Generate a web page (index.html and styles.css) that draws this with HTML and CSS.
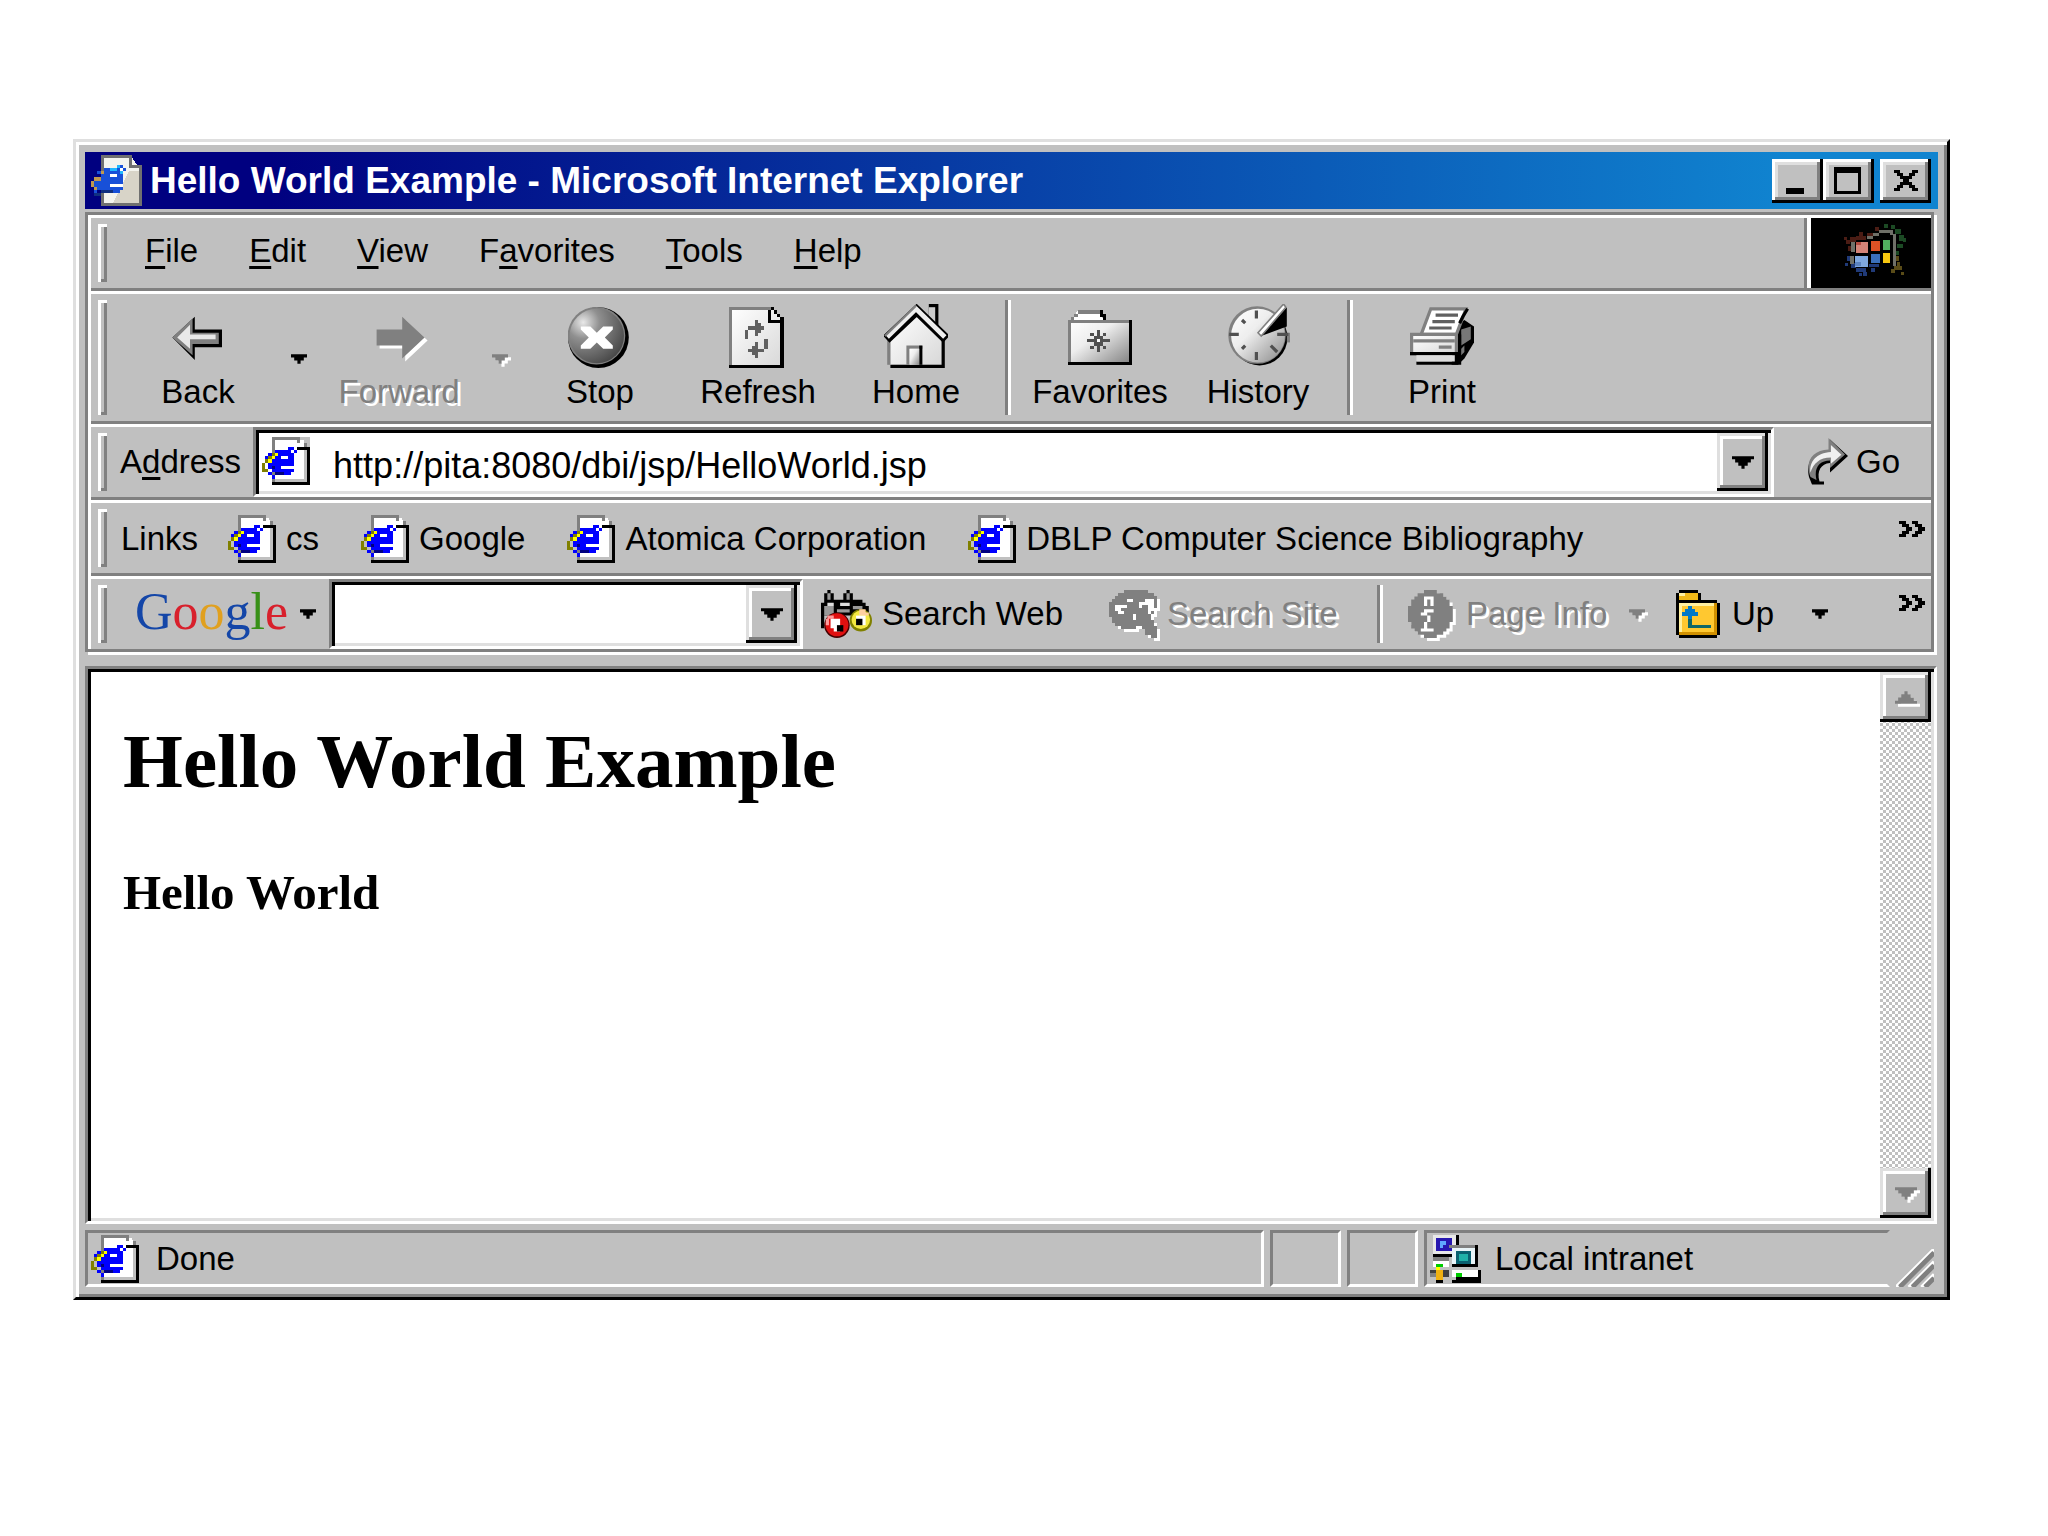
FILE: index.html
```html
<!DOCTYPE html>
<html lang="en">
<head>
<meta charset="utf-8">
<title>Hello World Example - Microsoft Internet Explorer</title>
<link rel="stylesheet" href="styles.css">
</head>
<body>
<svg class="defs" aria-hidden="true">
  <symbol id="page-e" viewBox="0 0 15 15">
    <path fill="#fff" d="M3 0h9l2 3v11H3z"/>
    <path fill="#808080" d="M3 0h9v1H4v13H3zM11 1h1v1h-1zM13 2h1v1h-1z"/>
    <path fill="#c0c0c0" d="M12 0h3v3h-1V2h-1V1h-1zM4 13h9V4h1v10H4z"/>
    <path fill="#000" d="M11 3h4v12H3v-1h11V4h-3z"/>
    <path fill="#00f" d="M8 3h2v1H8zM4 4h5v1H4zM10 4h1v1h-1zM2 5h1v1H2zM5 5h5v1H5zM4 6h2v1H4zM8 6h2v1H8zM3 7h7v1H3zM2 8h8v1H2zM2 9h4v1H2zM3 10h7v1H3zM4 11h5v1H4zM2 11h1v1H2zM3 12h1v1H3zM1 6h1v1H1z"/>
    <path fill="#fff" d="M9 4h1v1H9zM6 6h2v1H6zM6 9h4v1H6z"/>
    <path fill="#ff0" d="M4 5h1v1H4zM3 6h1v1H3zM2 7h1v1H2z"/>
    <path fill="#808000" d="M3 5h1v1H3zM2 6h1v1H2zM0 8h1v2h1v1H0zM1 7h1v1H1z"/>
    <path fill="#000080" d="M3 9h1v1H3zM4 11h3v1H4z"/>
  </symbol>
  <symbol id="drop" viewBox="0 0 5 3"><path d="M0 0h5v1H4v1H3v1H2V2H1V1H0z"/></symbol>
  <symbol id="drop-wide" viewBox="0 0 7 4"><path d="M0 0h7v1H6v1H5v1H4v1H3V3H2V2H1V1H0z"/></symbol>
  <symbol id="more" viewBox="0 0 8 5"><path d="M0 0h2v1h1v1h1v1H3v1H2v1H0V4h1V3h1V2H1V1H0zM4 0h2v1h1v1h1v1H7v1H6v1H4V4h1V3h1V2H5V1H4z"/></symbol>
  <linearGradient id="shine" x1="0" y1="0" x2="1" y2="1">
    <stop offset="0" stop-color="#fff"/><stop offset=".4" stop-color="#eee"/><stop offset="1" stop-color="#888"/>
  </linearGradient>
  <linearGradient id="paper" x1="0" y1="0" x2="1" y2="1">
    <stop offset="0" stop-color="#fff"/><stop offset="1" stop-color="#d8d8d8"/>
  </linearGradient>
  <radialGradient id="ball" cx=".25" cy=".25" r=".85">
    <stop offset="0" stop-color="#e8e8e8"/><stop offset=".35" stop-color="#909090"/><stop offset="1" stop-color="#484848"/>
  </radialGradient>
</svg>

<main class="window">
  <header class="titlebar">
    <svg class="title-icon" viewBox="0 0 16 16" shape-rendering="crispEdges" aria-hidden="true">
      <path fill="#f4f4ee" d="M4 1h9l2 3v11H4z"/>
      <path fill="#707070" d="M3 0h10v1H4v14h11V3h1v13H3zM12 1h1v2h3v1h-4z"/>
      <path fill="#d8d4c8" d="M12 5h3v10H7z"/>
      <path fill="#1850d8" d="M8 3h2v1H8zM4 4h5v1H4zM10 4h1v1h-1zM2 5h1v1H2zM4 5h6v1H4zM3 6h3v1H3zM8 6h2v1H8zM3 7h7v1H3zM1 8h9v1H1zM1 9h5v1H1zM2 10h8v1H2zM4 11h5v1H4zM1 11h1v1H1z"/>
      <path fill="#20b8ff" d="M6 4h2v1H6zM8 3h1v1H8zM9 5h1v1H9z"/>
      <path fill="#fff" d="M9 4h1v1H9zM6 6h2v1H6zM6 9h4v1H6z"/>
      <path fill="#c09850" d="M3 5h1v1H3zM1 7h2v1H1zM0 8h1v3h1v-1H0z"/>
      <path fill="#103080" d="M3 11h4v1H3zM1 12h2v1H1z"/>
    </svg>
    <h1 class="title-text">Hello World Example - Microsoft Internet Explorer</h1>
    <div class="title-buttons">
      <button class="title-button" aria-label="Minimize"><svg viewBox="0 0 10 10" shape-rendering="crispEdges"><path d="M1 8h6v2H1z"/></svg></button>
      <button class="title-button" aria-label="Maximize"><svg viewBox="0 0 10 10" shape-rendering="crispEdges"><path fill-rule="evenodd" d="M0 1h9v9H0zM1 3v6h7V3z"/></svg></button>
      <button class="title-button close" aria-label="Close"><svg viewBox="0 0 10 10" shape-rendering="crispEdges"><path d="M1 2h2v1h1v1h2V3h1V2h2v1H8v1H7v1H6v1h1v1h1v1h1v1H7V8H6V7H4v1H3v1H1V8h1V7h1V6h1V5H3V4H2V3H1z"/></svg></button>
    </div>
  </header>

  <section class="rebar">
    <div class="menu-row">
      <nav class="band menu">
        <span class="grip"></span>
        <button><u>F</u>ile</button>
        <button><u>E</u>dit</button>
        <button><u>V</u>iew</button>
        <button>F<u>a</u>vorites</button>
        <button><u>T</u>ools</button>
        <button><u>H</u>elp</button>
      </nav>
      <svg class="brand" viewBox="0 0 120 70" shape-rendering="crispEdges" aria-hidden="true">
        <path fill="#4b1c14" d="M35 22h4v4h-4zM39 19h6v5h-6zM48 14h4v4h-4zM56 15h6v4h-6zM64 9h4v4h-4zM37 28h5v5h-5zM33 19h3v3h-3zM45 18h10v4H45z"/>
        <path fill="#203a78" d="M36 38h5v5h-5zM40 45h5v5h-5zM45 50h10v4H45zM52 54h4v4h-4zM60 50h4v4h-4zM34 45h3v3h-3zM58 46h10v3H58zM48 55h3v3h-3z"/>
        <path fill="#1c4a24" d="M73 6h4v4h-4zM80 7h4v4h-4zM84 11h6v5h-6zM88 17h5v6h-5zM86 26h6v4h-6zM92 20h3v4h-3zM84 33h4v4h-4z"/>
        <path fill="#5a4c18" d="M84 38h4v5h-4zM83 48h8v4h-8zM86 44h3v4h-3zM80 51h4v4h-4zM90 54h3v3h-3z"/>
        <path fill="#6f7068" d="M56 18h6v-3h6v-3h14v4h3v32h-3V17h-3v-2H68v3h-6v3h-6zM40 24h4v10h-4zM39 38h4v8h-4z"/>
        <path fill="#d48478" d="M45 24h12v11H45z"/><path fill="#b44b40" d="M45 24h5v3h-5z"/>
        <path fill="#7fa8df" d="M44 38h13v11H44z"/><path fill="#5c84c0" d="M44 44h6v4h-6z"/>
        <path fill="#df5225" d="M60 23h9v10h-9z"/><path fill="#50b060" d="M72 22h7v10h-7z"/>
        <path fill="#3b70bb" d="M60 36h9v9h-9z"/><path fill="#f8c810" d="M72 35h7v10h-7z"/>
      </svg>
    </div>

    <div class="band tools">
      <span class="grip"></span>
      <button class="tool">
        <svg viewBox="0 0 20 20" aria-hidden="true"><path fill="#000" d="M2 10.500L9 4v4h8.500v5.500H9v4z"/><path fill="#808080" d="M2 10.500L8.300 4.500V9h8.200v3.500H8.300v3.500z"/><path fill="#e8e8e8" d="M3.500 10.500L7.500 6.500v3h8v1.500h-8v3z"/></svg>
        <span>Back</span>
      </button>
      <button class="tool-drop" aria-label="Back history"><svg class="drop" aria-hidden="true"><use href="#drop"/></svg></button>
      <button class="tool off" disabled>
        <svg viewBox="-1 0 20 20" aria-hidden="true"><path fill="#808080" d="M2 8h8V4l7 6.500L10 17v-4H2z"/></svg>
        <span>Forward</span>
      </button>
      <button class="tool-drop off" disabled aria-label="Forward history"><svg class="drop" aria-hidden="true"><use href="#drop"/></svg></button>
      <button class="tool">
        <svg viewBox="1 0 20 20" aria-hidden="true"><circle cx="10.500" cy="10.500" r="9.500"/><circle cx="9.900" cy="9.900" r="9" fill="#808080"/><circle cx="10" cy="10" r="8.500" fill="url(#ball)"/><path fill="#fff" d="M5 7h3l2 2 2-2h3v1l-2.500 2.500L15 13v1h-3l-2-2-2 2H5v-1l2.500-2.500L5 8z"/></svg>
        <span>Stop</span>
      </button>
      <button class="tool">
        <svg viewBox="0 0 20 20" shape-rendering="crispEdges" aria-hidden="true"><path fill="url(#paper)" d="M2 1h12l4 4v14H2z"/><path fill="#808080" d="M1 1h13v1H2v17H1z"/><path d="M14 1h1v1h1v1h1v1h1v16H1v-1h16V6h-4V2h1v3h3V4h-1V3h-1V2h-1z"/><path fill="#606060" d="M6 8h1V7h2V5h1v1h1v1h1v1h-1v1h-1v1H9V8H7v3H6zM13 11h-1v3h-2v-2H9v1H8v1H7v1h1v1h1v1h1v-2h2v-1h1z"/></svg>
        <span>Refresh</span>
      </button>
      <button class="tool">
        <svg viewBox="0 0 20 20" aria-hidden="true"><path fill="#000" d="M14 0h3v8h-3z"/><path fill="#ccc" d="M14 1h2v6h-2z"/><path fill="url(#paper)" d="M2 10L10 3l8 7v9H2z"/><path fill="none" stroke="#000" d="M2 19.500h16.500V11"/><path fill="none" stroke="#808080" d="M1.500 11v8"/><path fill="none" stroke="#000" stroke-width="3" d="M.7 11l9.500-9 9.300 9"/><path fill="none" stroke="#eee" stroke-width="1.500" d="M1 10.300l9-8.800 9 8.800"/><path fill="none" stroke="#808080" stroke-width=".7" d="M.3 10L10 .5"/><path fill="#808080" d="M7 13h5v1H8v5H7z"/><path fill="#000" d="M11 13h1v6h-1z"/><path fill="url(#shine)" d="M8 14h3v5H8z"/></svg>
        <span>Home</span>
      </button>
      <span class="divider"></span>
      <button class="tool">
        <svg viewBox="0 0 20 20" shape-rendering="crispEdges" aria-hidden="true"><path fill="#fff" d="M1 5l2-3h7l1 3z"/><path fill="url(#shine)" d="M1 5h18v13H1z"/><path fill="#808080" d="M0 5h1V4h1V3h1V2h7v1H3v1H2v1h17v1H1v12H0z"/><path d="M10 2h1v1h1v2h-1V4h-1zM19 5h1v14H0v-1h19z"/><path fill="#505050" d="M9 8h1v2h1v1h2v1h-2v1h-1v2H9v-2H8v-1H6v-1h2v-1h1zM7 9h1v1H7zM11 9h1v1h-1zM7 13h1v1H7zM11 13h1v1h-1z"/><path fill="#fff" d="M9 11h1v1H9z"/></svg>
        <span>Favorites</span>
      </button>
      <button class="tool">
        <svg viewBox="0 0 20 20" aria-hidden="true"><circle cx="10.500" cy="10.500" r="8.700"/><path fill="#808080" d="M20 9v3h-1V9z"/><circle cx="9.700" cy="9.700" r="9" fill="#808080"/><circle cx="10" cy="9.900" r="8.400" fill="url(#shine)"/><path d="M11 10l8-9v6z"/><path fill="#fff" stroke="#808080" stroke-width=".5" d="M10 9l8-9 .7 1L11 10z"/><path stroke="#505050" d="M9.500 2v2.500M1 9.500h3M9.500 15v2.500M16 9.500h3.500M5 5l1 1M6 13l-1 1M14 13l2 2"/></svg>
        <span>History</span>
      </button>
      <span class="divider"></span>
      <button class="tool">
        <svg viewBox="0 0 20 20" aria-hidden="true"><path d="M14 7l3-2 3 2v5l-3 5-2 2h-2z"/><path fill="#777" d="M16 8l3-1v4l-3 2zM15 15l2-2v2l-2 2z"/><path fill="#fff" stroke="#808080" d="M3.500 9.500l3-8h11l-3 8z"/><path stroke="#606060" d="M8 3.500h7M7 5.500h7M6 7.500h7"/><path stroke="#000" d="M18 1.500l-1.500 2.500-1 2"/><path fill="url(#paper)" stroke="#808080" d="M.5 9.500h14v6H.5z"/><path stroke="#808080" d="M1 11.500h13M9 13.500h4"/><path d="M0 15h15V9.500h1V19H2v-1h12v-2H0z"/><path fill="#ddd" d="M2 16h12v2H2z"/></svg>
        <span>Print</span>
      </button>
    </div>

    <div class="band address">
      <span class="grip"></span>
      <label class="address-label" for="url">A<u>d</u>dress</label>
      <div class="combo url-combo">
        <svg class="page-icon" shape-rendering="crispEdges" aria-hidden="true"><use href="#page-e"/></svg>
        <input id="url" type="text" value="http://pita:8080/dbi/jsp/HelloWorld.jsp">
        <button class="combo-button" aria-label="Show addresses"><svg class="drop-wide" aria-hidden="true"><use href="#drop-wide"/></svg></button>
      </div>
      <button class="go">
        <svg viewBox="0 0 14 16" aria-hidden="true"><path fill="#000" d="M2 15.500h4v-1H4.500C3.500 11 5 8.500 8 8.300v3.200l6-5.500L8 .5v3.500C2 4.500 0 8 1 13z"/><path fill="#808080" d="M1.500 13C-.5 8 2 4 7.500 3.800V0l5.500 5.500-5 4.500V7.500C4.500 7.500 2.500 10 3.500 14z"/><path fill="#f0f0f0" d="M1.500 11.500C1 8 3.500 5 8.300 4.700V2.300l3.500 3.300-3.500 3V6.500C4.500 6.500 2.500 8.500 1.500 11.500z"/></svg>
        <span>Go</span>
      </button>
    </div>

    <nav class="band links">
      <span class="grip"></span>
      <span class="links-label">Links</span>
      <a href="#cs"><svg class="page-icon" shape-rendering="crispEdges" aria-hidden="true"><use href="#page-e"/></svg>cs</a>
      <a href="#google"><svg class="page-icon" shape-rendering="crispEdges" aria-hidden="true"><use href="#page-e"/></svg>Google</a>
      <a href="#atomica"><svg class="page-icon" shape-rendering="crispEdges" aria-hidden="true"><use href="#page-e"/></svg>Atomica Corporation</a>
      <a href="#dblp"><svg class="page-icon" shape-rendering="crispEdges" aria-hidden="true"><use href="#page-e"/></svg>DBLP Computer Science Bibliography</a>
      <button class="more" aria-label="More links"><svg shape-rendering="crispEdges" aria-hidden="true"><use href="#more"/></svg></button>
    </nav>

    <div class="band search">
      <span class="grip"></span>
      <button class="google">
        <span class="google-name"><span class="blue">G</span><span class="red">o</span><span class="yellow">o</span><span class="blue">g</span><span class="green">l</span><span class="red">e</span></span>
        <svg class="drop" aria-hidden="true"><use href="#drop"/></svg>
      </button>
      <div class="combo search-combo">
        <input type="text" aria-label="Search terms">
        <button class="combo-button" aria-label="Show searches"><svg class="drop-wide" aria-hidden="true"><use href="#drop-wide"/></svg></button>
      </div>
      <button class="search-web">
        <svg viewBox="0 0 16 15" aria-hidden="true"><path d="M0 4h1V1h1V0h1v1h1v2h3V1h1V0h1v1h1v2h3v1h1v1h1v3H1v4H0z"/><path fill="#999" d="M2 1h1v2H2zM8 1h1v2H8zM1 5h3v3H1zM5 6h4v1H5zM10 5h3v1h-3z"/><path fill="#ddd" d="M6 4h3v1H6zM2 4h2v1H2z"/><circle cx="5" cy="11" r="4" fill="#400"/><circle cx="5" cy="10.900" r="3.600" fill="#e01010"/><path fill="#f99" d="M2 8h2v1H2zM1.500 9h1v2h-1z"/><path fill="#fff" d="M3 9h3v4H4v-1H3z"/><path d="M5 11h2v2H5z"/><circle cx="12.500" cy="9.500" r="3.500" fill="#808000"/><circle cx="12.500" cy="9.300" r="2.900" fill="#f4e840"/><path fill="#ffd0a0" d="M12 6h2v1h1v1h-3z"/><path fill="#fff" d="M11 8h3v3h-3z"/><path d="M11 9h2v2h-2z"/></svg>
        <span>Search Web</span>
      </button>
      <button class="search-site off" disabled>
        <svg viewBox="0 0 16 16" aria-hidden="true"><path fill="#808080" d="M5 0h8v1h2v1h1v4h-1v2h-1v2h1v2h1v4h-2v-1h-2v-2h-1v-1H9v1H4v-1H2v-1H1V9H0V4h1V3h1V2h1V1h2z"/><path fill="#fff" d="M2 5h4v1H4v1h1v1H3V7H2zM6 3h2v1H6zM10 4h2V3h3v4h-1v1h-1V5h-2v1h-1zM8 8h1v2H8z"/></svg>
        <span>Search Site</span>
      </button>
      <span class="divider"></span>
      <button class="page-info off" disabled>
        <svg viewBox="0 0 15 15" aria-hidden="true"><path fill="#808080" d="M5 0h4v1h2v1h1v1h1v2h1v5h-1v2h-1v1h-1v1H9v1H5v-1H3v-1H2v-1H1v-2H0V5h1V3h1V2h1V1h2z"/><path fill="#fff" d="M5 2h3v3H7V3H6v2H5zM4 7h1V6h3v1H6v1H4zM6 8h1v2H6v2h2v1H4v-1h1v-2h1z"/></svg>
        <span>Page Info</span>
        <svg class="drop" aria-hidden="true"><use href="#drop"/></svg>
      </button>
      <button class="up">
        <svg viewBox="0 0 14 15" shape-rendering="crispEdges" aria-hidden="true"><path d="M1 0h6v1h1v2h5v1h1v10h-1v1H1v-1H0V1h1z"/><path fill="#f0b818" d="M1 1h6v2H1z"/><path fill="#fff0a0" d="M1 1h2v1H1zM1 4h11v1H2v8H1z"/><path fill="#ffc830" d="M2 5h10v8H2z"/><path fill="#d09000" d="M12 4h1v10H1v-1h11z"/><path fill="#0078c8" d="M4 5h1v1h1v1h1v1H5v3H4V8H2V7h1V6h1z"/><path fill="#106868" d="M4 9h1v2h6v1H4z"/></svg>
        <span>Up</span>
        <svg class="drop" aria-hidden="true"><use href="#drop"/></svg>
      </button>
      <button class="more" aria-label="More buttons"><svg shape-rendering="crispEdges" aria-hidden="true"><use href="#more"/></svg></button>
    </div>
  </section>

  <section class="view">
    <article class="document">
      <h2>Hello World Example</h2>
      <h3>Hello World</h3>
    </article>
    <div class="scrollbar">
      <button class="scroll-button off" disabled aria-label="Scroll up"><svg class="drop-wide" viewBox="0 0 7 4" aria-hidden="true"><path d="M3 0h1v1h1v1h1v1h1v1H0V3h1V2h1V1h1z"/></svg></button>
      <button class="scroll-button off" disabled aria-label="Scroll down"><svg class="drop-wide" aria-hidden="true"><use href="#drop-wide"/></svg></button>
    </div>
  </section>

  <footer class="status">
    <div class="field state">
      <svg class="page-icon" shape-rendering="crispEdges" aria-hidden="true"><use href="#page-e"/></svg>
      <span>Done</span>
    </div>
    <div class="field small"></div>
    <div class="field small"></div>
    <div class="field zone">
      <svg viewBox="0 0 16 15" shape-rendering="crispEdges" aria-hidden="true"><path d="M1 0h8v7H1z"/><path fill="#e8e8e8" d="M1 0h7v6H1z"/><path fill="#2818b0" d="M2 1h5v4H2z"/><path fill="#60a8ff" d="M3 2h2v1H4v1H3z"/><path fill="#fff" d="M1 8h5v2H1z"/><path fill="#0c0" d="M2 9h2v1H2z"/><path fill="#404040" d="M0 11h6v2H0z"/><path fill="#808080" d="M0 12h2v1H0zM1 7h5v1H1z"/><path fill="#f0b010" d="M2 11h2v3H2z"/><path fill="#ff0" d="M2 10h1v1H2z"/><path d="M2 14h2v1H2zM7 3h8v7H7zM8 13h8v2H7v-1h1zM15 11h1v2h-1z"/><path fill="#808080" d="M6 3h8v1H6z"/><path fill="#e8f4f8" d="M7 4h7v5H7z"/><path fill="#0a6070" d="M8 5h5v4H8z"/><path fill="#20b0a8" d="M9 6h3v2H9z"/><path fill="#c0c0c0" d="M7 10h8v1H7z"/><path fill="#fff" d="M7 11h8v2H7z"/><path fill="#0c0" d="M8 12h2v1H8z"/></svg>
      <span>Local intranet</span>
    </div>
    <svg class="size-grip" viewBox="0 0 12 12" aria-hidden="true"><path stroke="#fff" d="M0 12L12 0M4 12l8-8M8 12l4-4"/><path stroke="#808080" stroke-width="1.500" d="M1.200 12L12 1.200M5.200 12L12 5.200M9.200 12L12 9.200"/></svg>
  </footer>
</main>
</body>
</html>
```
FILE: styles.css
```css
* {
  box-sizing: border-box;
}

body {
  margin: 0;
  padding: 139px 98px 139px 73px;
  background: #fff;
  color: #000;
  font: 33px/38px "Liberation Sans", Arial, sans-serif;
}

button {
  margin: 0;
  padding: 0;
  border: 0;
  background: none;
  color: inherit;
  font: inherit;
  text-align: left;
  white-space: nowrap;
}

input {
  flex: 1;
  min-width: 0;
  margin: 0;
  border: 0;
  outline: 0;
  background: #fff;
  color: #000;
  font: 36px/42px "Liberation Sans", Arial, sans-serif;
}

svg {
  display: block;
  flex: none;
}

u {
  text-decoration-thickness: 3px;
  text-underline-offset: 4px;
  text-decoration-skip-ink: none;
}

.defs {
  position: absolute;
  width: 0;
  height: 0;
}

/* Window frame */
.window {
  padding: 10px 9px 6px;
  background: #c0c0c0;
  border: 3px solid;
  border-color: #dfdfdf #000 #000 #dfdfdf;
  box-shadow: inset 3px 3px #fff, inset -3px -3px #808080;
}

.titlebar {
  display: flex;
  align-items: center;
  height: 57px;
  padding: 0 7px 0 6px;
  background: linear-gradient(90deg, #000080 10%, #1084d0 92%);
}

.title-icon {
  width: 51px;
  height: 51px;
}

.title-text {
  flex: 1;
  margin: 0 0 0 8px;
  color: #fff;
  font-size: 37px;
  line-height: 42px;
  font-weight: bold;
  white-space: nowrap;
}

.title-buttons {
  display: flex;
}

.title-button {
  display: flex;
  align-items: center;
  justify-content: center;
  width: 51px;
  height: 44px;
  padding-bottom: 4px;
  background: #c0c0c0;
  box-shadow: inset -3px -3px #000, inset 3px 3px #fff, inset -6px -6px #808080, inset 6px 6px #dfdfdf;
}

.title-button svg {
  width: 30px;
  height: 30px;
}

.close {
  margin-left: 6px;
}

/* Toolbar bands */
.rebar {
  margin: 3px 4px 0 0;
  padding: 3px 0 0 3px;
  border: 3px solid #808080;
  box-shadow: 3px 3px #fff, inset 3px 3px #fff;
}

.band {
  display: flex;
  align-items: center;
  min-height: 70px;
  padding-left: 7px;
}

.band + .band,
.menu-row + .band {
  box-shadow: 0 -3px #fff, 0 -6px #808080;
  margin-top: 6px;
}

.grip {
  align-self: stretch;
  flex: none;
  width: 9px;
  margin: 6px 0;
  background: #c0c0c0;
  box-shadow: inset 3px 3px #fff, inset -3px -3px #808080;
}

.divider {
  align-self: stretch;
  flex: none;
  width: 6px;
  margin: 6px 10px;
  border-left: 3px solid #808080;
  border-right: 3px solid #fff;
}

.menu-row {
  display: flex;
}

.menu {
  flex: 1;
  gap: 51px;
  padding-bottom: 4px;
  border-right: 3px solid #808080;
}

.menu .grip {
  margin: 6px -13px 2px 0;
}

.brand {
  width: 124px;
  height: 70px;
  border-left: 4px solid #fff;
  background: #000;
}

.off {
  color: #808080;
  fill: #808080;
  text-shadow: 3px 3px #fff;
}

.off > svg {
  filter: drop-shadow(3px 3px 0 #fff);
}

.drop {
  width: 16px;
  height: 10px;
}

.drop-wide {
  width: 22px;
  height: 13px;
}

.tools .grip {
  margin-right: 12px;
}

.tool {
  display: flex;
  flex-direction: column;
  align-items: center;
  gap: 5px;
  width: 158px;
  padding: 10px 0;
}

.tool svg {
  width: 64px;
  height: 64px;
}

.tool-drop {
  display: flex;
  justify-content: center;
  width: 43px;
  padding-top: 2px;
}

/* Address band */
.address-label {
  margin: 0 12px 0 13px;
}

.combo {
  display: flex;
  align-items: stretch;
  align-self: stretch;
  padding: 3px;
  background: #fff;
  border: 3px solid;
  border-color: #808080 #fff #fff #808080;
  box-shadow: inset 3px 3px #000, inset -3px -3px #dfdfdf;
}

.url-combo {
  flex: 1;
}

.url-combo .page-icon {
  margin: 4px 0 0 3px;
}

.url-combo input {
  padding: 7px 0 0 23px;
}

.combo-button,
.scroll-button {
  display: flex;
  align-items: center;
  justify-content: center;
  width: 51px;
  background: #c0c0c0;
  box-shadow: inset -3px -3px #000, inset 3px 3px #dfdfdf, inset -6px -6px #808080, inset 6px 6px #fff;
}

.page-icon {
  width: 48px;
  height: 48px;
}

.go {
  display: flex;
  align-items: center;
  gap: 8px;
  width: 157px;
  padding-left: 32px;
}

.go svg {
  width: 42px;
  height: 48px;
}

/* Links band */
.links {
  gap: 42px;
  padding-top: 2px;
}

.links .grip {
  margin-top: 4px;
}

.links-label {
  margin: 0 -12px 0 -28px;
}

.links a {
  display: flex;
  align-items: center;
  gap: 10px;
  color: inherit;
  text-decoration: none;
  white-space: nowrap;
}

.more {
  align-self: flex-start;
  margin: 16px 6px 0 auto;
}

.more svg {
  width: 26px;
  height: 16px;
}

/* Search band */
.search button {
  flex: none;
}

.google {
  display: flex;
  align-items: center;
  gap: 12px;
  width: 222px;
  padding-left: 28px;
}

.google-name {
  padding-bottom: 5px;
  font: 52px/58px "Liberation Serif", "Times New Roman", serif;
}

.blue { color: #1446a8; }
.red { color: #d8202c; }
.yellow { color: #e0a020; }
.green { color: #389018; }

.search-combo {
  width: 474px;
}

.search-combo input {
  padding: 0 9px;
}

.search-web,
.search-site,
.page-info,
.up {
  display: flex;
  align-items: center;
  gap: 10px;
}

.search-web {
  width: 306px;
  padding-left: 18px;
}

.search-site {
  width: 258px;
}

.search svg:not(.drop):not(.drop-wide) {
  height: 48px;
}

.search .more svg:not(.drop):not(.drop-wide) {
  height: 16px;
}

.search-web svg { width: 51px; }
.search-site svg { width: 48px; }
.page-info svg:first-child { width: 48px; }
.up svg:first-child { width: 48px; }

.page-info {
  width: 281px;
  padding-left: 15px;
}

.page-info .drop {
  margin-left: 12px;
}

.up .drop {
  margin-left: 28px;
}

/* Document view */
.view {
  display: flex;
  min-height: 558px;
  margin: 14px 1px 0 0;
  padding: 3px;
  background: #fff;
  border: 3px solid;
  border-color: #808080 #fff #fff #808080;
  box-shadow: inset 3px 3px #000, inset -3px -3px #dfdfdf;
}

.document {
  flex: 1;
  padding: 46px 32px;
  font-family: "Liberation Serif", "Times New Roman", serif;
}

.document h2 {
  margin: 0 0 61px;
  font-size: 77px;
  line-height: 86px;
}

.document h3 {
  margin: 0;
  font-size: 49px;
  line-height: 56px;
}

.scrollbar {
  display: flex;
  flex-direction: column;
  justify-content: space-between;
  width: 51px;
  background: repeating-conic-gradient(#c0c0c0 0 25%, #fff 0 50%) 0 0 / 6px 6px;
}

.scroll-button {
  height: 50px;
}

/* Status bar */
.status {
  display: flex;
  gap: 6px;
  margin-top: 6px;
  padding: 0 4px 4px 0;
}

.field {
  display: flex;
  align-items: center;
  height: 57px;
  border: 3px solid;
  border-color: #808080 #fff #fff #808080;
}

.state {
  flex: 1;
  gap: 17px;
  padding-left: 3px;
}

.small {
  width: 71px;
}

.zone {
  gap: 14px;
  width: 466px;
  padding-left: 3px;
  border-right-color: transparent;
}

.zone svg {
  width: 51px;
  height: 48px;
}

.size-grip {
  align-self: flex-end;
  width: 38px;
  height: 38px;
}
```
